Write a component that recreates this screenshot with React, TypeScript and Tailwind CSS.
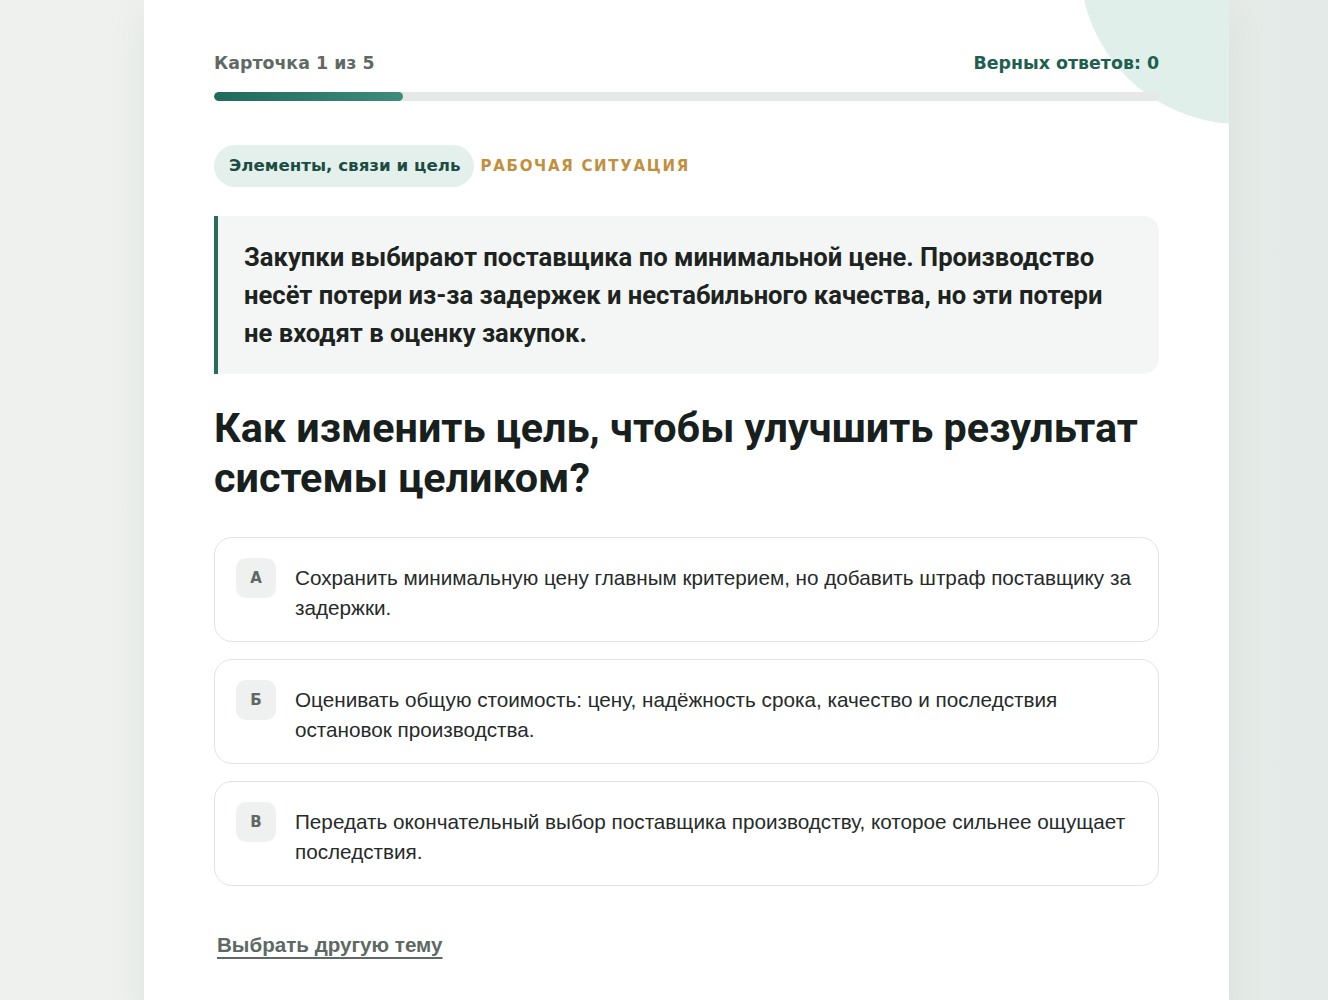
const options = [
  {
    letter: 'А',
    text: 'Сохранить минимальную цену главным критерием, но добавить штраф поставщику за задержки.',
  },
  {
    letter: 'Б',
    text: 'Оценивать общую стоимость: цену, надёжность срока, качество и последствия остановок производства.',
  },
  {
    letter: 'В',
    text: 'Передать окончательный выбор поставщика производству, которое сильнее ощущает последствия.',
  },
];

export default function App() {
  const current = 1;
  const total = 5;
  const progress = (current / total) * 100;

  return (
    <div className="min-h-screen w-full bg-gradient-to-r from-[#eef1ee] via-[#eef0ec] to-[#e4eae7] font-['Liberation_Sans',Arial,sans-serif]">
      <div className="ml-[144px] w-[1085px] min-h-[1000px] bg-white relative overflow-hidden shadow-[0_10px_40px_rgba(30,60,50,0.06)] px-[70px] pt-[53px] pb-16">
        {/* decorative circle */}
        <div className="absolute w-[320px] h-[320px] rounded-full bg-[#e1efea] left-[936px] top-[-196px]" />

        {/* Header */}
        <div className="relative flex items-center justify-between font-['DejaVu_Sans',sans-serif]">
          <span className="text-[17.4px] font-bold text-[#5f6a66] leading-[20px]">
            Карточка {current} из {total}
          </span>
          <span className="text-[17.4px] font-bold text-[#205f50] leading-[20px]">
            Верных ответов: 0
          </span>
        </div>
        <div className="relative mt-[19px] h-[9px] w-full rounded-full bg-[#e6e9e7] overflow-hidden">
          <div
            className="h-full rounded-full bg-gradient-to-r from-[#1f6a58] to-[#3e8c7a]"
            style={{ width: `${progress}%` }}
          />
        </div>

        {/* Tags */}
        <div className="relative mt-[44px] flex items-center gap-[7px] font-['DejaVu_Sans',sans-serif]">
          <span className="h-[42px] pl-[15px] pr-[13px] inline-flex items-center rounded-full bg-[#e3f0ec] text-[16.7px] font-bold text-[#1d4d42]">
            Элементы, связи и цель
          </span>
          <span className="text-[15px] font-bold text-[#c28f3c] uppercase tracking-[1.7px]">
            Рабочая ситуация
          </span>
        </div>

        {/* Situation */}
        <div className="relative mt-[29px] border-l-[4px] border-[#2a6b5a] bg-[#f4f6f5] rounded-r-[16px] pl-[26px] pr-[30px] pt-[22px] pb-[22px]">
          <p className="font-['Roboto',sans-serif] font-bold text-[25.6px] leading-[38px] text-[#1c2320]">
            Закупки выбирают поставщика по минимальной цене. Производство несёт
            потери из-за задержек и нестабильного качества, но эти потери не
            входят в оценку закупок.
          </p>
        </div>

        {/* Question */}
        <h1 className="relative mt-[29px] font-['Roboto',sans-serif] font-bold text-[41.3px] leading-[50px] text-[#17201d]">
          Как изменить цель, чтобы улучшить результат системы целиком?
        </h1>

        {/* Options */}
        <div className="relative mt-[34px] flex flex-col gap-[17px]">
          {options.map((o) => (
            <button
              key={o.letter}
              className="flex items-start gap-[19px] text-left rounded-[18px] border border-[#e1e4e2] bg-white pl-[21px] pr-[22px] pt-[20px] pb-[18px]"
            >
              <span className="w-[40px] h-[40px] shrink-0 rounded-[10px] bg-[#eef1ef] flex items-center justify-center font-['DejaVu_Sans',sans-serif] text-[15px] font-bold text-[#5e6864]">
                {o.letter}
              </span>
              <span className="pt-[5px] text-[20.7px] leading-[30px] text-[#262b29]">
                {o.text}
              </span>
            </button>
          ))}
        </div>

        {/* Footer link */}
        <div className="relative mt-[47px] pl-[3px]">
          <a
            href="#"
            className="text-[20.6px] leading-[24px] font-bold text-[#5d6964] underline decoration-[2px] underline-offset-[5px]"
          >
            Выбрать другую тему
          </a>
        </div>
      </div>
    </div>
  );
}
